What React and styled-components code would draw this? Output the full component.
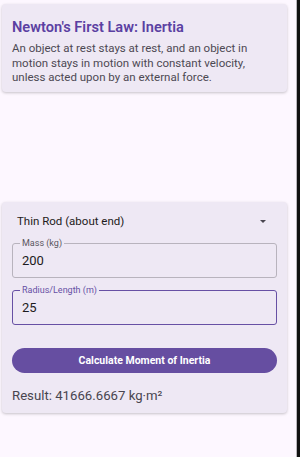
import React from "react";
import styled, { createGlobalStyle } from "styled-components";

const GlobalStyle = createGlobalStyle`
  html, body {
    margin: 0;
    padding: 0;
    background: #fdf7ff;
    font-family: Roboto, "Noto Sans", sans-serif;
  }
`;

const Page = styled.div`
  display: flex;
  width: 300px;
  height: 457px;
  overflow: hidden;
  background: #fdf7ff;
`;

const Main = styled.main`
  flex: 1;
  display: flex;
  flex-direction: column;
  padding: 4px 9px 0 2px;
`;

const ScrollEdge = styled.div`
  width: 3px;
  border-left: 1px solid #b9b6bc;
  background: #111;
`;

const Card = styled.section`
  background: #eee8f4;
  border-radius: 4px;
  padding: ${(p) => p.$pad};
  margin-top: ${(p) => p.$top || 0}px;
  box-shadow: 0 1px 3px rgba(0, 0, 0, 0.22);
  display: flex;
  flex-direction: column;
`;

const Title = styled.h2`
  margin: 0;
  font-size: 14.6px;
  font-weight: 600;
  color: #5b40a2;
  line-height: 20px;
`;

const Body = styled.p`
  margin: 4px 0 0;
  font-size: 11.5px;
  line-height: 14.5px;
  color: #4d4953;
`;

const Select = styled.div`
  display: flex;
  align-items: center;
  justify-content: space-between;
  height: 27px;
  padding: 0 11px 0 5px;
  font-size: 11.5px;
  color: #1d1b20;
`;

const Caret = styled.span`
  width: 0;
  height: 0;
  border-left: 3.5px solid transparent;
  border-right: 3.5px solid transparent;
  border-top: 3.5px solid #49454f;
`;

const Field = styled.fieldset`
  margin: ${(p) => p.$top}px 0 0;
  padding: 0 9px 8px;
  border: ${(p) => (p.$focus ? "1.5px solid #6750a4" : "1px solid #b8b3bd")};
  border-radius: 3px;
  min-width: 0;
`;

const Legend = styled.legend`
  padding: 0 2px;
  margin-left: -2px;
  font-size: 9px;
  line-height: 9px;
  color: ${(p) => (p.$focus ? "#6750a4" : "#5a5660")};
`;

const Value = styled.div`
  font-size: 13px;
  line-height: 16px;
  margin-top: 5px;
  color: #1d1b20;
`;

const Button = styled.button`
  margin-top: 23px;
  height: 25px;
  border: none;
  border-radius: 13px;
  background: #664ea1;
  color: #fff;
  font-family: Roboto, sans-serif;
  font-size: 10.5px;
  font-weight: 700;
`;

const Result = styled.div`
  margin-top: 15px;
  font-size: 13.2px;
  line-height: 16px;
  color: #49454f;
`;

export default function App() {
  return (
    <Page>
      <GlobalStyle />
      <Main>
        <Card $pad="13px 10px 7px">
          <Title>Newton's First Law: Inertia</Title>
          <Body>
            An object at rest stays at rest, and an object in motion stays in
            motion with constant velocity, unless acted upon by an external
            force.
          </Body>
        </Card>
        <Card $top={110} $pad="6px 10px 9px">
          <Select>
            <span>Thin Rod (about end)</span>
            <Caret />
          </Select>
          <Field $top={4}>
            <Legend>Mass (kg)</Legend>
            <Value>200</Value>
          </Field>
          <Field $top={8} $focus>
            <Legend $focus>Radius/Length (m)</Legend>
            <Value>25</Value>
          </Field>
          <Button>Calculate Moment of Inertia</Button>
          <Result>Result: 41666.6667 kg·m²</Result>
        </Card>
      </Main>
      <ScrollEdge />
    </Page>
  );
}
